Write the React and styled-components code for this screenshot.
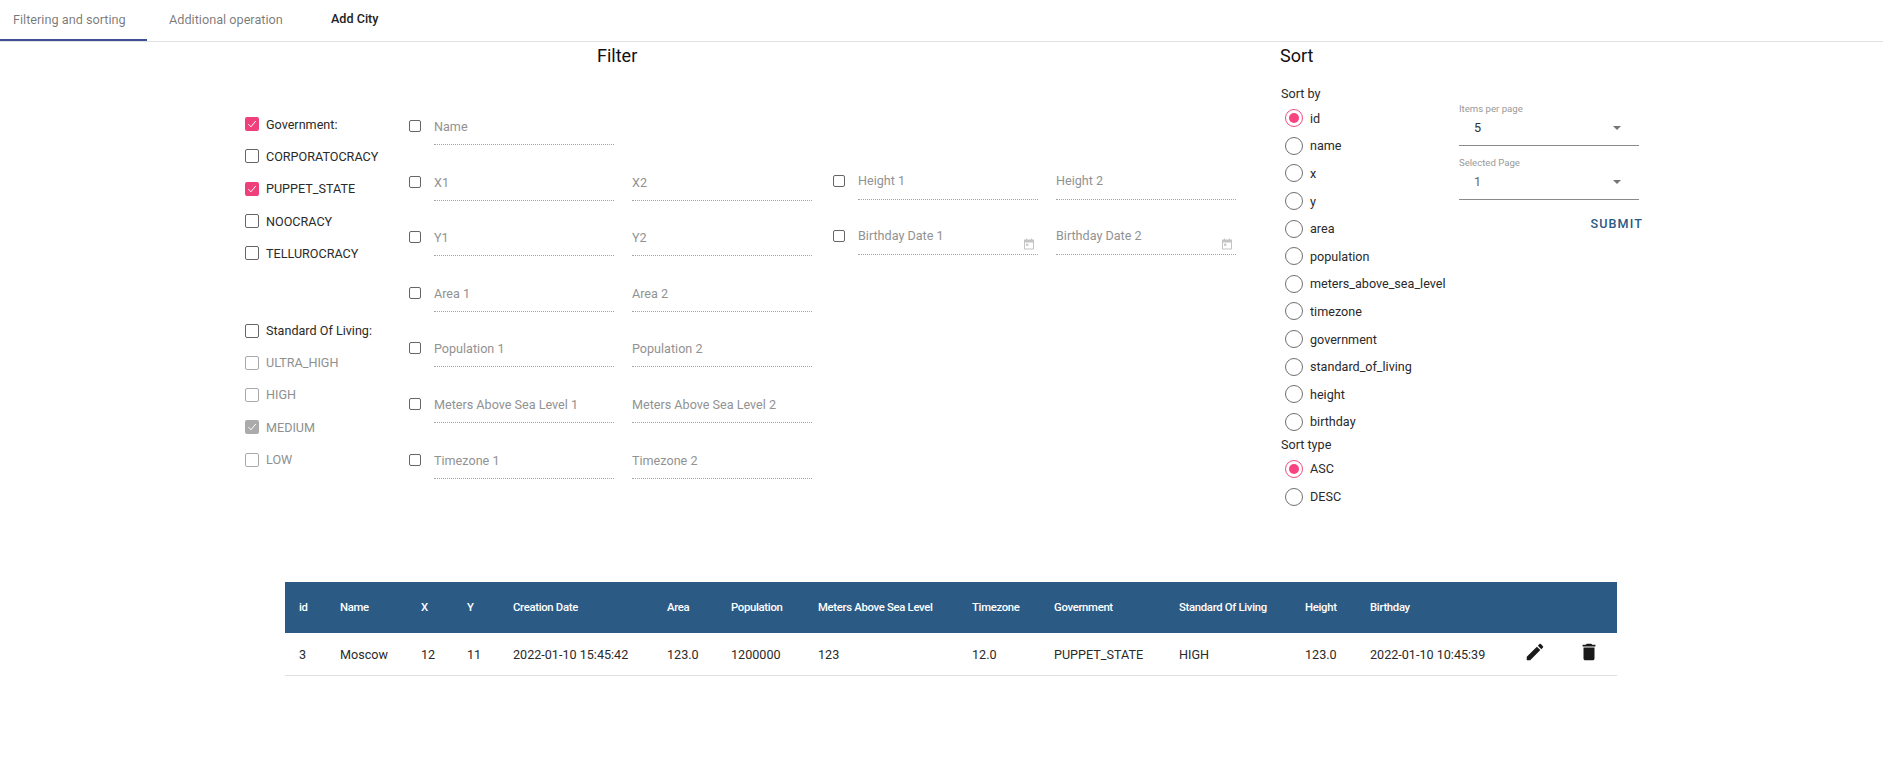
import styled, { createGlobalStyle } from "styled-components";

const GlobalStyle = createGlobalStyle`
  html, body {
    margin: 0;
    padding: 0;
    background: #fff;
    font-family: Roboto, "Liberation Sans", sans-serif;
    color: rgba(0, 0, 0, 0.87);
  }
`;

const BLUE = "#2b5a85";

const GOVERNMENTS = [
  { label: "CORPORATOCRACY" },
  { label: "PUPPET_STATE", checked: true },
  { label: "NOOCRACY" },
  { label: "TELLUROCRACY" },
];

const LIVING = [
  { label: "ULTRA_HIGH" },
  { label: "HIGH" },
  { label: "MEDIUM", checked: true },
  { label: "LOW" },
];

const MAIN_FIELDS = [
  ["Name"],
  ["X1", "X2"],
  ["Y1", "Y2"],
  ["Area 1", "Area 2"],
  ["Population 1", "Population 2"],
  ["Meters Above Sea Level 1", "Meters Above Sea Level 2"],
  ["Timezone 1", "Timezone 2"],
];

const SORT_FIELDS = [
  "id", "name", "x", "y", "area", "population", "meters_above_sea_level",
  "timezone", "government", "standard_of_living", "height", "birthday",
];

const COLUMNS = [
  { title: "id", width: 55 },
  { title: "Name", width: 81 },
  { title: "X", width: 46 },
  { title: "Y", width: 46 },
  { title: "Creation Date", width: 154 },
  { title: "Area", width: 64 },
  { title: "Population", width: 87 },
  { title: "Meters Above Sea Level", width: 154 },
  { title: "Timezone", width: 82 },
  { title: "Government", width: 125 },
  { title: "Standard Of Living", width: 126 },
  { title: "Height", width: 65 },
  { title: "Birthday", width: 140 },
  { title: "", width: 50 },
  { title: "", width: 57 },
];

const ROW = [
  "3", "Moscow", "12", "11", "2022-01-10 15:45:42", "123.0", "1200000", "123",
  "12.0", "PUPPET_STATE", "HIGH", "123.0", "2022-01-10 10:45:39",
];

function Check({ checked, disabled, small }) {
  return (
    <CheckBox $checked={checked} $disabled={disabled} $small={small}>
      {checked && (
        <svg viewBox="0 0 14 14" width="14" height="14" fill="none" stroke="#fff" strokeWidth="1">
          <path d="M3.4 7.2 5.9 9.8 10.8 4" />
        </svg>
      )}
    </CheckBox>
  );
}

function CheckRow({ label, checked, disabled, short }) {
  return (
    <CheckLine $short={short}>
      <Check checked={checked} disabled={disabled} />
      <CheckLabel $disabled={disabled}>{label}</CheckLabel>
    </CheckLine>
  );
}

function Field({ label, date, side }) {
  return (
    <FieldBox $side={side}>
      <FieldText>{label}</FieldText>
      {date && (
        <CalendarIcon viewBox="0 0 12 12" width="12" height="12">
          <path
            fill="#c4c4c4"
            d="M1.5 1.5h1.5V.6h1v.9h4V.6h1v.9h1.5c.3 0 .5.2.5.5v9c0 .3-.2.5-.5.5h-9a.5.5 0 0 1-.5-.5V2c0-.3.2-.5.5-.5zm.5 3v6h8v-6H2zm1 1.2h2.4v2H3v-2z"
          />
        </CalendarIcon>
      )}
    </FieldBox>
  );
}

function Radio({ label, checked }) {
  return (
    <RadioLine>
      <RadioRing $checked={checked}>{checked && <RadioDot />}</RadioRing>
      <RadioLabel>{label}</RadioLabel>
    </RadioLine>
  );
}

function Select({ label, value, muted }) {
  return (
    <SelectBox>
      <SelectLabel>{label}</SelectLabel>
      <SelectValue $muted={muted}>
        <span>{value}</span>
        <SelectArrow />
      </SelectValue>
    </SelectBox>
  );
}

export default function App() {
  return (
    <>
      <GlobalStyle />
      <Tabs>
        <Tab $active $width={147}>Filtering and sorting</Tab>
        <Tab $width={184} $left={22}>Additional operation</Tab>
        <TabLink>Add City</TabLink>
      </Tabs>

      <Main>
        <FilterPanel>
          <FilterHeading>Filter</FilterHeading>
          <FilterBody>
            <CheckColumn>
              <CheckRow label="Government:" checked />
              {GOVERNMENTS.map((item) => (
                <CheckRow key={item.label} {...item} />
              ))}
              <LivingGroup>
                <CheckRow label="Standard Of Living:" short />
                {LIVING.map((item) => (
                  <CheckRow key={item.label} {...item} disabled />
                ))}
              </LivingGroup>
            </CheckColumn>

            <FieldColumn>
              {MAIN_FIELDS.map((labels) => (
                <FieldRow key={labels[0]}>
                  <Check small />
                  {labels.map((label) => (
                    <Field key={label} label={label} />
                  ))}
                </FieldRow>
              ))}
            </FieldColumn>

            <FieldColumn $side>
              <FieldRow $side>
                <Check small />
                <Field label="Height 1" side />
                <Field label="Height 2" side />
              </FieldRow>
              <FieldRow $side>
                <Check small />
                <Field label="Birthday Date 1" date side />
                <Field label="Birthday Date 2" date side />
              </FieldRow>
            </FieldColumn>
          </FilterBody>
        </FilterPanel>

        <SortPanel>
          <SortHeading>Sort</SortHeading>
          <SortBody>
            <RadioColumn>
              <GroupLabel>Sort by</GroupLabel>
              {SORT_FIELDS.map((name) => (
                <Radio key={name} label={name} checked={name === "id"} />
              ))}
              <GroupLabel>Sort type</GroupLabel>
              <Radio label="ASC" checked />
              <Radio label="DESC" />
            </RadioColumn>
            <SelectColumn>
              <Select label="Items per page" value="5" />
              <Select label="Selected Page" value="1" muted />
              <SubmitButton>SUBMIT</SubmitButton>
            </SelectColumn>
          </SortBody>
        </SortPanel>
      </Main>

      <TableWrap>
        <Table>
          <colgroup>
            {COLUMNS.map((col, i) => (
              <col key={i} width={col.width} />
            ))}
          </colgroup>
          <thead>
            <tr>
              {COLUMNS.map((col, i) => (
                <HeadCell key={i} $first={i === 0}>{col.title}</HeadCell>
              ))}
            </tr>
          </thead>
          <tbody>
            <tr>
              {ROW.map((value, i) => (
                <BodyCell key={i} $first={i === 0}>{value}</BodyCell>
              ))}
              <IconCell>
                <svg viewBox="0 0 24 24" width="22" height="22" fill="#1a1a1a">
                  <path d="M3 17.25V21h3.75L17.81 9.94l-3.75-3.75L3 17.25zM20.71 7.04c.39-.39.39-1.02 0-1.41l-2.34-2.34c-.39-.39-1.02-.39-1.41 0l-1.83 1.83 3.75 3.75 1.83-1.83z" />
                </svg>
              </IconCell>
              <IconCell>
                <svg viewBox="0 0 24 24" width="22" height="22" fill="#1a1a1a">
                  <path d="M6 19c0 1.1.9 2 2 2h8c1.1 0 2-.9 2-2V7H6v12zM19 4h-3.5l-1-1h-5l-1 1H5v2h14V4z" />
                </svg>
              </IconCell>
            </tr>
          </tbody>
        </Table>
      </TableWrap>
    </>
  );
}

const Tabs = styled.div`
  display: flex;
  height: 41px;
  border-bottom: 1px solid #e0e0e0;
`;

const Tab = styled.div`
  box-sizing: border-box;
  width: ${({ $width }) => $width}px;
  height: 41px;
  padding: 12px 0 0 ${({ $left }) => $left ?? 13}px;
  font-size: 12.7px;
  line-height: 15px;
  color: rgba(0, 0, 0, 0.54);
  border-bottom: ${({ $active }) => ($active ? "2px solid #3f5195" : "none")};
`;

const TabLink = styled.div`
  padding-top: 11px;
  font-size: 12.6px;
  line-height: 15px;
  font-weight: 500;
  color: #222;
`;

const Main = styled.div`
  display: flex;
  height: 540px;
  padding-left: 245px;
`;

const FilterPanel = styled.section`
  width: 1035px;
`;

const FilterHeading = styled.h2`
  margin: 0;
  height: 25px;
  padding: 2px 0 0 352px;
  font-size: 18px;
  line-height: 23px;
  font-weight: 400;
  color: #111;
`;

const FilterBody = styled.div`
  display: flex;
  padding-top: 39px;
`;

const CheckColumn = styled.div`
  width: 164px;
`;

const CheckLine = styled.div`
  display: flex;
  align-items: center;
  height: ${({ $short }) => ($short ? 31 : 32.3)}px;
`;

const LivingGroup = styled.div`
  margin-top: 46px;
`;

const CheckBox = styled.span`
  box-sizing: border-box;
  display: inline-flex;
  flex: none;
  width: ${({ $small }) => ($small ? 12 : 14)}px;
  height: ${({ $small }) => ($small ? 12 : 14)}px;
  border-radius: 2px;
  border: ${({ $checked, $disabled }) =>
    $checked ? "none" : `1px solid ${$disabled ? "#aaa" : "#666"}`};
  background: ${({ $checked, $disabled }) =>
    $checked ? ($disabled ? "#ababab" : "#f0407c") : "#fff"};
`;

const CheckLabel = styled.span`
  margin-left: 7px;
  font-size: 12.6px;
  white-space: nowrap;
  color: ${({ $disabled }) => ($disabled ? "#8f8f8f" : "#2a2a2a")};
`;

const FieldColumn = styled.div`
  display: flex;
  flex-direction: column;
  width: 424px;
  padding-top: ${({ $side }) => ($side ? 55 : 0)}px;
`;

const FieldRow = styled.div`
  display: flex;
  align-items: flex-start;
  gap: 18px;
  height: ${({ $side }) => ($side ? 55 : 55.6)}px;
  padding-top: 5px;
  box-sizing: border-box;

  & > span:first-child {
    margin: 7px -5px 0 0;
  }
`;

const FieldBox = styled.div`
  position: relative;
  box-sizing: border-box;
  width: 180px;
  height: 32px;
  padding-top: ${({ $side }) => ($side ? 5 : 6)}px;
  border-bottom: 1px dotted #a5a5a5;
`;

const FieldText = styled.div`
  font-size: 12.6px;
  line-height: 16px;
  color: #929292;
  white-space: nowrap;
`;

const CalendarIcon = styled.svg`
  position: absolute;
  right: 3px;
  bottom: 4px;
`;

const SortPanel = styled.section`
  width: 380px;
`;

const SortHeading = styled.h2`
  margin: 0;
  height: 25px;
  padding-top: 2px;
  font-size: 18px;
  line-height: 23px;
  font-weight: 400;
  color: #111;
`;

const SortBody = styled.div`
  display: flex;
  padding-top: 16px;
`;

const RadioColumn = styled.div`
  width: 179px;
`;

const GroupLabel = styled.div`
  height: 19.5px;
  font-size: 12.6px;
  line-height: 17px;
  padding-left: 1px;
  color: #2a2a2a;
`;

const RadioLine = styled.div`
  display: flex;
  align-items: center;
  height: 27.6px;
  padding-left: 5px;
`;

const RadioRing = styled.span`
  box-sizing: border-box;
  display: flex;
  align-items: center;
  justify-content: center;
  width: 18px;
  height: 18px;
  border-radius: 50%;
  border: 1px solid ${({ $checked }) => ($checked ? "#ee4d84" : "#707070")};
`;

const RadioDot = styled.span`
  width: 10px;
  height: 10px;
  border-radius: 50%;
  background: #f7437f;
`;

const RadioLabel = styled.span`
  margin-left: 7px;
  font-size: 12.6px;
  white-space: nowrap;
  color: #2a2a2a;
`;

const SelectColumn = styled.div`
  display: flex;
  flex-direction: column;
  width: 184px;
  padding-top: 18px;
`;

const SelectBox = styled.div`
  width: 180px;
  height: 54px;
`;

const SelectLabel = styled.div`
  font-size: 9.6px;
  line-height: 12px;
  color: #999;
`;

const SelectValue = styled.div`
  box-sizing: border-box;
  display: flex;
  align-items: center;
  justify-content: space-between;
  height: 31px;
  padding: 0 18px 5px 15px;
  font-size: 12.6px;
  color: ${({ $muted }) => ($muted ? "#666" : "#333")};
  border-bottom: 1px solid #8a8a8a;
`;

const SelectArrow = styled.span`
  width: 0;
  height: 0;
  border-left: 4px solid transparent;
  border-right: 4px solid transparent;
  border-top: 4px solid #757575;
`;

const SubmitButton = styled.button`
  align-self: flex-end;
  margin-top: 5px;
  padding: 0;
  border: none;
  background: none;
  font-family: inherit;
  font-size: 12.6px;
  font-weight: 500;
  letter-spacing: 1.1px;
  color: ${BLUE};
`;

const TableWrap = styled.div`
  width: 1332px;
  margin-left: 285px;
`;

const Table = styled.table`
  width: 1332px;
  table-layout: fixed;
  border-collapse: collapse;
`;

const HeadCell = styled.th`
  box-sizing: border-box;
  height: 51px;
  padding: 0 0 1px ${({ $first }) => ($first ? 14 : 0)}px;
  background: ${BLUE};
  color: #fff;
  font-size: 11.3px;
  letter-spacing: -0.3px;
  font-weight: 500;
  text-align: left;
  white-space: nowrap;
`;

const BodyCell = styled.td`
  height: 42px;
  padding: 2px 0 0 ${({ $first }) => ($first ? 14 : 0)}px;
  box-sizing: border-box;
  border-bottom: 1px solid #e0e0e0;
  font-size: 12.6px;
  color: #2a2a2a;
  white-space: nowrap;
`;

const IconCell = styled.td`
  padding: 0;
  border-bottom: 1px solid #e0e0e0;
  text-align: center;

  & svg {
    display: block;
    margin: -4px auto 0;
  }
`;
